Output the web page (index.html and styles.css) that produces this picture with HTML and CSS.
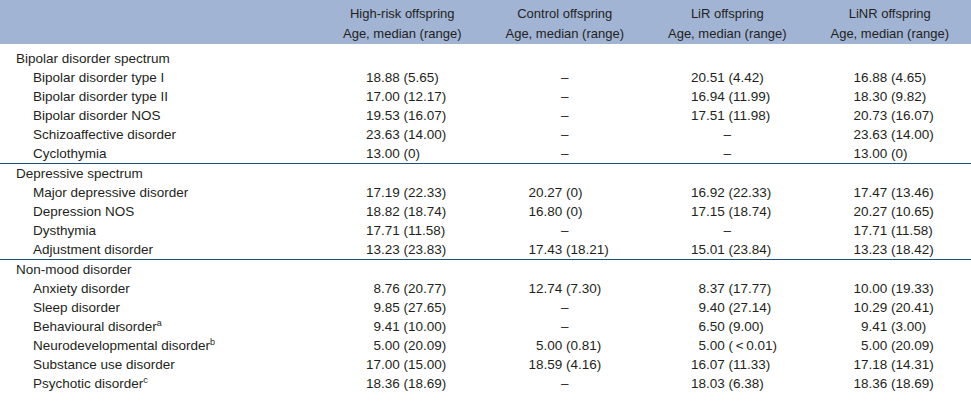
FILE: index.html
```html
<!DOCTYPE html>
<html>
<head>
<meta charset="utf-8">
<link rel="stylesheet" href="styles.css">
</head>
<body>
<table class="tbl">
  <colgroup>
    <col class="c-label">
    <col class="c-val"><col class="c-val"><col class="c-val"><col class="c-val">
  </colgroup>
  <thead>
    <tr>
      <th></th>
      <th>High-risk offspring<br>Age, median (range)</th>
      <th>Control offspring<br>Age, median (range)</th>
      <th>LiR offspring<br>Age, median (range)</th>
      <th>LiNR offspring<br>Age, median (range)</th>
    </tr>
  </thead>
  <tbody class="grp first">
    <tr><td class="head">Bipolar disorder spectrum</td><td></td><td></td><td></td><td></td></tr>
    <tr><td class="sub">Bipolar disorder type I</td><td class="v">18.88 (5.65)</td><td class="dash">–</td><td class="v">20.51 (4.42)</td><td class="v">16.88 (4.65)</td></tr>
    <tr><td class="sub">Bipolar disorder type II</td><td class="v">17.00 (12.17)</td><td class="dash">–</td><td class="v">16.94 (11.99)</td><td class="v">18.30 (9.82)</td></tr>
    <tr><td class="sub">Bipolar disorder NOS</td><td class="v">19.53 (16.07)</td><td class="dash">–</td><td class="v">17.51 (11.98)</td><td class="v">20.73 (16.07)</td></tr>
    <tr><td class="sub">Schizoaffective disorder</td><td class="v">23.63 (14.00)</td><td class="dash">–</td><td class="dash">–</td><td class="v">23.63 (14.00)</td></tr>
    <tr><td class="sub">Cyclothymia</td><td class="v">13.00 (0)</td><td class="dash">–</td><td class="dash">–</td><td class="v">13.00 (0)</td></tr>
  </tbody>
  <tbody class="grp">
    <tr><td class="head">Depressive spectrum</td><td></td><td></td><td></td><td></td></tr>
    <tr><td class="sub">Major depressive disorder</td><td class="v">17.19 (22.33)</td><td class="v">20.27 (0)</td><td class="v">16.92 (22.33)</td><td class="v">17.47 (13.46)</td></tr>
    <tr><td class="sub">Depression NOS</td><td class="v">18.82 (18.74)</td><td class="v">16.80 (0)</td><td class="v">17.15 (18.74)</td><td class="v">20.27 (10.65)</td></tr>
    <tr><td class="sub">Dysthymia</td><td class="v">17.71 (11.58)</td><td class="dash">–</td><td class="dash">–</td><td class="v">17.71 (11.58)</td></tr>
    <tr><td class="sub">Adjustment disorder</td><td class="v">13.23 (23.83)</td><td class="v">17.43 (18.21)</td><td class="v">15.01 (23.84)</td><td class="v">13.23 (18.42)</td></tr>
  </tbody>
  <tbody class="grp last">
    <tr><td class="head">Non-mood disorder</td><td></td><td></td><td></td><td></td></tr>
    <tr><td class="sub">Anxiety disorder</td><td class="v"><span class="ph">0</span>8.76 (20.77)</td><td class="v">12.74 (7.30)</td><td class="v"><span class="ph">0</span>8.37 (17.77)</td><td class="v">10.00 (19.33)</td></tr>
    <tr><td class="sub">Sleep disorder</td><td class="v"><span class="ph">0</span>9.85 (27.65)</td><td class="dash">–</td><td class="v"><span class="ph">0</span>9.40 (27.14)</td><td class="v">10.29 (20.41)</td></tr>
    <tr><td class="sub">Behavioural disorder<sup>a</sup></td><td class="v"><span class="ph">0</span>9.41 (10.00)</td><td class="dash">–</td><td class="v"><span class="ph">0</span>6.50 (9.00)</td><td class="v"><span class="ph">0</span>9.41 (3.00)</td></tr>
    <tr><td class="sub">Neurodevelopmental disorder<sup>b</sup></td><td class="v"><span class="ph">0</span>5.00 (20.09)</td><td class="v"><span class="ph">0</span>5.00 (0.81)</td><td class="v"><span class="ph">0</span>5.00 (&thinsp;&lt;&thinsp;0.01)</td><td class="v"><span class="ph">0</span>5.00 (20.09)</td></tr>
    <tr><td class="sub">Substance use disorder</td><td class="v">17.00 (15.00)</td><td class="v">18.59 (4.16)</td><td class="v">16.07 (11.33)</td><td class="v">17.18 (14.31)</td></tr>
    <tr><td class="sub">Psychotic disorder<sup>c</sup></td><td class="v">18.36 (18.69)</td><td class="dash">–</td><td class="v">18.03 (6.38)</td><td class="v">18.36 (18.69)</td></tr>
  </tbody>
</table>
</body>
</html>
```

FILE: styles.css
```css
html, body {
  margin: 0;
  padding: 0;
  background: #ffffff;
}
body {
  font-family: "Liberation Sans", Arial, sans-serif;
  font-size: 13.5px;
  color: #231f20;
  width: 971px;
}
.tbl {
  width: 971px;
  border-collapse: collapse;
  table-layout: fixed;
}
.c-label { width: 321px; }
.c-val { width: 162.5px; }

thead th {
  background: #a2b4d4;
  font-weight: normal;
  font-size: 13px;
  text-align: center;
  line-height: 20px;
  padding: 4px 0 0 0;
  height: 40px;
  vertical-align: top;
}
td {
  padding: 0;
  height: 19px;
  line-height: 19px;
  white-space: nowrap;
  vertical-align: middle;
}
.grp.first tr:first-child td { padding-top: 5px; }
.grp tr:last-child td { border-bottom: 1px solid #1c4d7e; }
.grp.last tr:last-child td { border-bottom: none; }

.head { padding-left: 16px; }
.sub { padding-left: 33px; }
.v { padding-left: 45px; }
.dash { text-align: center; }
.ph { visibility: hidden; }
sup {
  font-size: 9px;
  line-height: 0;
  vertical-align: 5px;
}
```
